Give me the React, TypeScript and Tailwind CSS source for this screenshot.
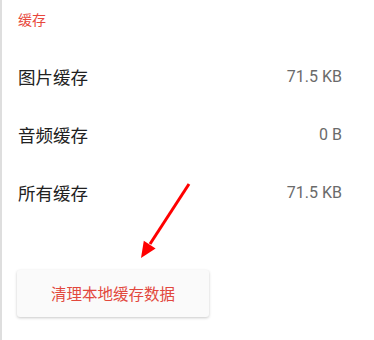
import React from "react";

const rows = [
  { label: "图片缓存", value: "71.5 KB" },
  { label: "音频缓存", value: "0 B" },
  { label: "所有缓存", value: "71.5 KB" },
];

export default function App() {
  return (
    <div
      className="relative w-[374px] h-[340px] bg-white border-l-2 border-[#dedede] overflow-hidden"
      style={{ fontFamily: 'Roboto, "Noto Sans CJK SC", sans-serif' }}
    >
      <div className="pl-[16px] pt-[10px]">
        <div className="text-[14px] leading-[18px] text-[#e8483c]" style={{ fontFamily: '"Noto Sans CJK SC", sans-serif' }}>缓存</div>
        <div className="mt-[20px] flex flex-col">
          {rows.map((r) => (
            <div key={r.label} className="h-[58px] flex items-center justify-between pr-[32px]">
              <span className="text-[17.5px] text-[#212121]" style={{ fontFamily: '"Noto Sans CJK SC", sans-serif' }}>
                {r.label}
              </span>
              <span className="text-[16px] text-[#6a6a6a]">{r.value}</span>
            </div>
          ))}
        </div>
        <div className="mt-[48px] -ml-[1px] w-[192px] h-[47px] rounded-[3px] bg-[#fafafa] shadow-[0_1px_3px_rgba(0,0,0,0.22)] flex items-center justify-center">
          <span className="text-[15.5px] text-[#e2483d]" style={{ fontFamily: '"Noto Sans CJK SC", sans-serif' }}>
            清理本地缓存数据
          </span>
        </div>
      </div>
      <svg className="absolute left-[-2px] top-0 pointer-events-none" width="374" height="340" viewBox="0 0 374 340">
        <line x1="189" y1="184" x2="150" y2="244" stroke="#ff0000" strokeWidth="3" />
        <polygon points="141,258 155.6,248.4 143.8,240.8" fill="#ff0000" />
      </svg>
    </div>
  );
}
